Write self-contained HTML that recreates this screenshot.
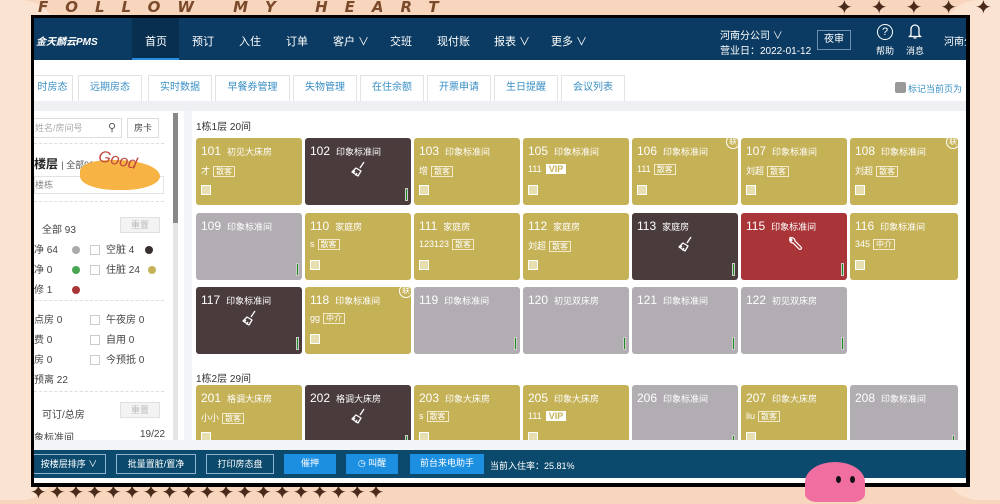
<!DOCTYPE html>
<html><head><meta charset="utf-8"><style>
*{margin:0;padding:0;box-sizing:border-box}
body{width:1000px;height:500px;overflow:hidden;background:#f8d6bd;font-family:"Liberation Sans","Noto Sans CJK SC",sans-serif;position:relative}
.a{position:absolute}
.frame{left:31px;top:15px;width:939px;height:472px;background:#000}
.in{left:34px;top:18px;width:932px;height:465px;background:#fff;overflow:hidden}
.nav{left:0;top:0;width:932px;height:42px;background:#0b3b62;color:#fff;font-size:11px}
.nav span{position:absolute;top:15px;white-space:nowrap}
.tabs{left:0;top:57px;height:26px}
.tab{position:absolute;top:0;height:26px;border:1px solid #e3e3e3;border-bottom:none;color:#3a8fc4;font-size:10px;line-height:24px;text-align:center;background:#fff}
.strip{left:0;top:83px;width:932px;height:10px;background:#eef0f4}
.left{left:0;top:93px;width:138px;height:338px;background:#fff;font-size:10px;color:#444}
.sb{left:139px;top:95px;width:5px;height:340px;background:#e4e4e4}
.sbt{left:139px;top:95px;width:5px;height:110px;background:#888}
.main{left:150px;top:93px;width:782px;height:338px;background:#f3f4f7}
.mi{left:158px;top:93px;width:780px;height:338px;background:#fff}
.c{position:absolute;width:106px;height:67px;border-radius:3px;color:#fff;font-size:9px}
.g{background:#c5b156}.d{background:#4a3c3c}.y{background:#b2adb3}.r{background:#a93538}
.c .n{position:absolute;left:5px;top:6px;font-size:12px}
.c .n i{font-style:normal;font-size:9px;margin-left:6px}
.c .p{position:absolute;left:5px;top:26px;font-size:9px}
.tg{border:1px solid #f3eacc;padding:0 2px;font-size:8px;margin-left:3px}
.vip{background:#fff;color:#c5b156;font-weight:bold;padding:0 3px;margin-left:4px;font-size:9px}
.lk{position:absolute;left:5px;top:47px;width:10px;height:10px;background:#e8dfb0;border:1px solid #fff}
.bar{position:absolute;right:3px;bottom:4px;width:3px;height:13px;background:#1b8a1b;border:1px solid #ccc}
.lian{position:absolute;right:-2px;top:-3px;width:14px;height:14px;border:1px solid #fff;border-radius:50%;font-size:8px;text-align:center;line-height:12px}
.ic{position:absolute;left:45px;top:22px}
.foot{left:0;top:432px;width:932px;height:28px;background:#0b4a6d}
.btn{position:absolute;top:4px;height:20px;font-size:9px;line-height:18px;text-align:center;color:#fff}
.bo{border:1px solid #8fb6d0}
.bb{background:#1d8fe0}
.dot{display:inline-block;width:8px;height:8px;border-radius:50%;vertical-align:middle}
.cb{display:inline-block;width:10px;height:10px;border:1px solid #ccc;vertical-align:middle;margin-right:6px}
.dsh{position:absolute;left:0;width:130px;border-top:1px dashed #ddd}
.rs{position:absolute;width:40px;height:16px;background:#f3f3f3;border:1px solid #e0e0e0;color:#bbb;font-size:9px;text-align:center;line-height:14px}
.dia{color:#4a2a1a;font-size:20px;line-height:20px;white-space:nowrap;font-family:"DejaVu Sans",sans-serif}
</style></head><body>
<svg width="0" height="0" style="position:absolute"><defs>
<symbol id="br" viewBox="0 0 18 18"><path d="M14 2l-4 6 M6 8l5 3-3 5-6-4z M5 11l-2 2 M7 13l-1.5 2.5" fill="none" stroke="#fff" stroke-width="1.3" stroke-linejoin="round"/></symbol>
</defs></svg>
<div class="a" style="left:0;top:0;width:60px;height:500px;background:#fbe3d1;border-radius:0 40px 40px 0"></div>
<div class="a" style="left:940px;top:0;width:60px;height:500px;background:#fbe3d1;border-radius:40px 0 0 40px"></div>
<div class="a" style="left:38px;top:-2px;font-size:15px;font-weight:900;font-style:italic;color:#7a4a2a;letter-spacing:17px;font-family:'DejaVu Sans',sans-serif">FOLLOW MY HEART</div>
<div class="a dia" style="left:836px;top:-3px;letter-spacing:18px">✦✦✦✦✦</div>
<div class="a dia" style="left:30px;top:482px;letter-spacing:2px">✦✦✦✦✦✦✦✦✦✦✦✦✦✦✦✦✦✦✦</div>
<div class="a frame"></div>
<div class="a in">
 <div class="a nav">
  <span style="left:2px;font-size:10px;font-weight:bold;font-style:italic">金天麟云PMS</span>
  <div class="a" style="left:98px;top:0;width:47px;height:42px;background:#082f50"></div>
  <div class="a" style="left:98px;top:40px;width:47px;height:2px;background:#2a8ce0"></div>
  <span style="left:111px">首页</span><span style="left:158px">预订</span><span style="left:205px">入住</span><span style="left:252px">订单</span><span style="left:299px">客户 ∨</span><span style="left:356px">交班</span><span style="left:403px">现付账</span><span style="left:460px">报表 ∨</span><span style="left:517px">更多 ∨</span>
  <span style="left:686px;top:9px;font-size:10px">河南分公司 ∨</span>
  <span style="left:686px;top:24px;font-size:10px">营业日：2022-01-12</span>
  <div class="a" style="left:783px;top:12px;width:34px;height:20px;border:1px solid #6d8fae;font-size:10px;text-align:center;line-height:18px">夜审</div>
  <div class="a" style="left:843px;top:6px;width:16px;height:16px;border:1.5px solid #fff;border-radius:50%;text-align:center;font-size:11px;line-height:14px">?</div>
  <span style="left:842px;top:26px;font-size:9px">帮助</span>
  <svg class="a" style="left:874px;top:5px" width="14" height="17" viewBox="0 0 14 17"><path d="M3 12V6a4 4 0 0 1 8 0v6l1.5 1.5h-11z M5.5 15h3" fill="none" stroke="#fff" stroke-width="1.3"/></svg>
  <span style="left:872px;top:26px;font-size:9px">消息</span>
  <span style="left:910px;font-size:10px">河南分</span>
 </div>
 <div class="a tabs">
  <div class="tab" style="left:-2px;width:41px">时房态</div>
  <div class="tab" style="left:44px;width:64px">远期房态</div>
  <div class="tab" style="left:114px;width:64px">实时数据</div>
  <div class="tab" style="left:181px;width:75px">早餐券管理</div>
  <div class="tab" style="left:259px;width:64px">失物管理</div>
  <div class="tab" style="left:326px;width:64px">在住余额</div>
  <div class="tab" style="left:393px;width:64px">开票申请</div>
  <div class="tab" style="left:460px;width:64px">生日提醒</div>
  <div class="tab" style="left:527px;width:64px">会议列表</div>
  <div class="a" style="left:861px;top:7px;width:11px;height:11px;background:#999;border-radius:2px"></div>
  <div class="a" style="left:874px;top:7px;font-size:9px;color:#3a8fc4;white-space:nowrap">标记当前页为</div>
 </div>
 <div class="a strip"></div>
 <div class="a left">
  <div class="a" style="left:-2px;top:7px;width:90px;height:20px;border:1px solid #ddd;font-size:9px;color:#aaa;line-height:18px;padding-left:2px">姓名/房间号<span style="position:absolute;right:5px;color:#555;font-size:11px">⚲</span></div>
  <div class="a" style="left:93px;top:7px;width:32px;height:20px;border:1px solid #ddd;font-size:9px;line-height:18px;text-align:center">房卡</div>
  <div class="dsh" style="top:32px"></div>
  <div class="a" style="left:0;top:44px;font-size:12px;font-weight:bold;color:#222">楼层 <span style="font-weight:normal;font-size:9px;color:#555">| 全部93</span></div>
  <div class="a" style="left:0;top:65px;width:130px;height:18px;border:1px solid #e3e3e3;font-size:9px;color:#888;line-height:16px">楼栋</div>
  <div class="dsh" style="top:90px"></div>
  <div class="a" style="left:8px;top:110px">全部 93</div><div class="rs" style="left:86px;top:106px">重置</div>
  <div class="a" style="left:0;top:130px">净 64 &nbsp;&nbsp;&nbsp;&nbsp;<span class="dot" style="background:#aaa"></span></div>
  <div class="a" style="left:56px;top:130px"><span class="cb"></span>空脏 4 &nbsp;&nbsp;&nbsp;<span class="dot" style="background:#3a2f2f"></span></div>
  <div class="a" style="left:0;top:150px">净 0 &nbsp;&nbsp;&nbsp;&nbsp;&nbsp;&nbsp;<span class="dot" style="background:#4aa552"></span></div>
  <div class="a" style="left:56px;top:150px"><span class="cb"></span>住脏 24 &nbsp;&nbsp;<span class="dot" style="background:#c5b156"></span></div>
  <div class="a" style="left:0;top:170px">修 1 &nbsp;&nbsp;&nbsp;&nbsp;&nbsp;&nbsp;<span class="dot" style="background:#a93538"></span></div>
  <div class="dsh" style="top:189px"></div>
  <div class="a" style="left:0;top:200px">点房 0</div><div class="a" style="left:56px;top:200px"><span class="cb"></span>午夜房 0</div>
  <div class="a" style="left:0;top:220px">费 0</div><div class="a" style="left:56px;top:220px"><span class="cb"></span>自用 0</div>
  <div class="a" style="left:0;top:240px">房 0</div><div class="a" style="left:56px;top:240px"><span class="cb"></span>今预抵 0</div>
  <div class="a" style="left:0;top:260px">预离 22</div>
  <div class="dsh" style="top:280px"></div>
  <div class="a" style="left:8px;top:295px">可订/总房</div><div class="rs" style="left:86px;top:291px">重置</div>
  <div class="a" style="left:0;top:318px">象标准间</div><div class="a" style="left:106px;top:318px">19/22</div>
 </div>
 <div class="a sb"></div><div class="a sbt"></div>
 <div class="a main"></div>
 <div class="a mi">
  <div class="a" style="left:4px;top:7px;font-size:10px;color:#333">1栋1层 20间</div>
  <div class="a" style="left:4px;top:259px;font-size:10px;color:#333">1栋2层 29间</div>
 </div>
 <div class="a" style="left:162px;top:120px">
  <div class="c g" style="left:0;top:0"><div class="n">101<i>初见大床房</i></div><div class="p">才<span class="tg">散客</span></div><div class="lk"></div></div>
  <div class="c d" style="left:109px;top:0"><div class="n">102<i>印象标准间</i></div><svg class="ic" width="18" height="18"><use href="#br"/></svg><div class="bar"></div></div>
  <div class="c g" style="left:218px;top:0"><div class="n">103<i>印象标准间</i></div><div class="p">增<span class="tg">散客</span></div><div class="lk"></div></div>
  <div class="c g" style="left:327px;top:0"><div class="n">105<i>印象标准间</i></div><div class="p">111<span class="vip">VIP</span></div><div class="lk"></div></div>
  <div class="c g" style="left:436px;top:0"><div class="n">106<i>印象标准间</i></div><div class="lian">联</div><div class="p">111<span class="tg">散客</span></div><div class="lk"></div></div>
  <div class="c g" style="left:545px;top:0"><div class="n">107<i>印象标准间</i></div><div class="p">刘超<span class="tg">散客</span></div><div class="lk"></div></div>
  <div class="c g" style="left:654px;top:0;width:108px"><div class="n">108<i>印象标准间</i></div><div class="lian">联</div><div class="p">刘超<span class="tg">散客</span></div><div class="lk"></div></div>

  <div class="c y" style="left:0;top:75px"><div class="n">109<i>印象标准间</i></div><div class="bar"></div></div>
  <div class="c g" style="left:109px;top:75px"><div class="n">110<i>家庭房</i></div><div class="p">s<span class="tg">散客</span></div><div class="lk"></div></div>
  <div class="c g" style="left:218px;top:75px"><div class="n">111<i>家庭房</i></div><div class="p">123123<span class="tg">散客</span></div><div class="lk"></div></div>
  <div class="c g" style="left:327px;top:75px"><div class="n">112<i>家庭房</i></div><div class="p">刘超<span class="tg">散客</span></div><div class="lk"></div></div>
  <div class="c d" style="left:436px;top:75px"><div class="n">113<i>家庭房</i></div><svg class="ic" width="18" height="18"><use href="#br"/></svg><div class="bar"></div></div>
  <div class="c r" style="left:545px;top:75px"><div class="n">115<i>印象标准间</i></div><svg class="ic" width="18" height="18" viewBox="0 0 18 18"><path d="M4 3a3.5 3.5 0 0 0 3 5l6 6a1.3 1.3 0 0 0 2-2l-6-6a3.5 3.5 0 0 0-5-3l2 2-1 1z" fill="none" stroke="#fff" stroke-width="1.2"/></svg><div class="bar"></div></div>
  <div class="c g" style="left:654px;top:75px;width:108px"><div class="n">116<i>印象标准间</i></div><div class="p">345<span class="tg">中介</span></div><div class="lk"></div></div>

  <div class="c d" style="left:0;top:149px"><div class="n">117<i>印象标准间</i></div><svg class="ic" width="18" height="18"><use href="#br"/></svg><div class="bar"></div></div>
  <div class="c g" style="left:109px;top:149px"><div class="n">118<i>印象标准间</i></div><div class="lian">联</div><div class="p">gg<span class="tg">中介</span></div><div class="lk"></div></div>
  <div class="c y" style="left:218px;top:149px"><div class="n">119<i>印象标准间</i></div><div class="bar"></div></div>
  <div class="c y" style="left:327px;top:149px"><div class="n">120<i>初见双床房</i></div><div class="bar"></div></div>
  <div class="c y" style="left:436px;top:149px"><div class="n">121<i>印象标准间</i></div><div class="bar"></div></div>
  <div class="c y" style="left:545px;top:149px"><div class="n">122<i>初见双床房</i></div><div class="bar"></div></div>

  <div class="c g" style="left:0;top:247px"><div class="n">201<i>格调大床房</i></div><div class="p">小小<span class="tg">散客</span></div><div class="lk"></div></div>
  <div class="c d" style="left:109px;top:247px"><div class="n">202<i>格调大床房</i></div><svg class="ic" width="18" height="18"><use href="#br"/></svg><div class="bar"></div></div>
  <div class="c g" style="left:218px;top:247px"><div class="n">203<i>印象大床房</i></div><div class="p">s<span class="tg">散客</span></div><div class="lk"></div></div>
  <div class="c g" style="left:327px;top:247px"><div class="n">205<i>印象大床房</i></div><div class="p">111<span class="vip">VIP</span></div><div class="lk"></div></div>
  <div class="c y" style="left:436px;top:247px"><div class="n">206<i>印象标准间</i></div><div class="bar"></div></div>
  <div class="c g" style="left:545px;top:247px"><div class="n">207<i>印象大床房</i></div><div class="p">liu<span class="tg">散客</span></div><div class="lk"></div></div>
  <div class="c y" style="left:654px;top:247px;width:108px"><div class="n">208<i>印象标准间</i></div><div class="bar"></div></div>
 </div>
 <div class="a" style="left:0;top:422px;width:932px;height:10px;background:#f3f4f7"></div>
 <div class="a foot">
  <div class="btn bo" style="left:-2px;width:74px">按楼层排序 ∨</div>
  <div class="btn bo" style="left:82px;width:80px">批量置脏/置净</div>
  <div class="btn bo" style="left:172px;width:68px">打印房态盘</div>
  <div class="btn bb" style="left:250px;width:52px">催押</div>
  <div class="btn bb" style="left:312px;width:52px">◷ 叫醒</div>
  <div class="btn bb" style="left:376px;width:74px">前台来电助手</div>
  <div class="a" style="left:456px;top:9px;font-size:9px;color:#fff">当前入住率：25.81%</div>
 </div>
</div>
<div class="a" style="left:805px;top:462px;width:60px;height:40px;background:#f06fa0;border-radius:50% 50% 20% 20%"></div>
<div class="a" style="left:836px;top:476px;width:5px;height:7px;background:#111;border-radius:50%"></div>
<div class="a" style="left:850px;top:476px;width:5px;height:7px;background:#111;border-radius:50%"></div>
<div class="a" style="left:80px;top:160px;width:80px;height:30px;background:#f7b344;border-radius:40% 60% 50% 50%"></div>
<div class="a" style="left:98px;top:152px;font-size:16px;color:#c0463c;font-style:italic;transform:rotate(12deg)">Good</div>
</body></html>
